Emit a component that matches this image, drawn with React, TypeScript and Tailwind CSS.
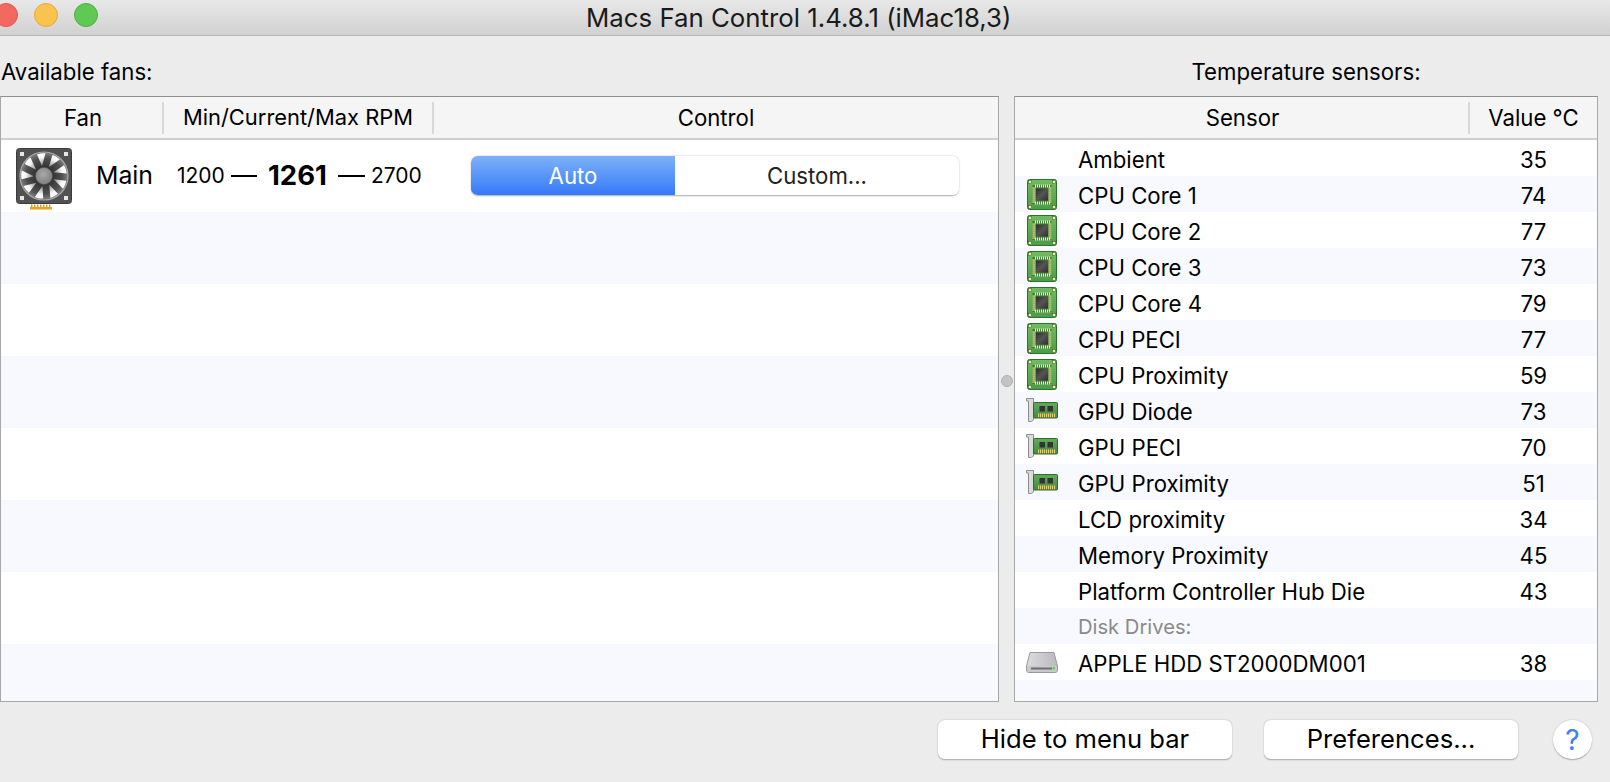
const font = { fontFamily: 'Inter, "Liberation Sans", sans-serif' }

const sensors = [
  { name: 'Ambient', value: '35', icon: '' },
  { name: 'CPU Core 1', value: '74', icon: 'cpu' },
  { name: 'CPU Core 2', value: '77', icon: 'cpu' },
  { name: 'CPU Core 3', value: '73', icon: 'cpu' },
  { name: 'CPU Core 4', value: '79', icon: 'cpu' },
  { name: 'CPU PECI', value: '77', icon: 'cpu' },
  { name: 'CPU Proximity', value: '59', icon: 'cpu' },
  { name: 'GPU Diode', value: '73', icon: 'gpu' },
  { name: 'GPU PECI', value: '70', icon: 'gpu' },
  { name: 'GPU Proximity', value: '51', icon: 'gpu' },
  { name: 'LCD proximity', value: '34', icon: '' },
  { name: 'Memory Proximity', value: '45', icon: '' },
  { name: 'Platform Controller Hub Die', value: '43', icon: '' },
  { name: 'Disk Drives:', value: '', icon: 'header' },
  { name: 'APPLE HDD ST2000DM001', value: '38', icon: 'hdd' },
]

const FanIcon = () => (
  <svg width="56" height="62" viewBox="0 0 56 62">
    <defs>
      <radialGradient id="disc" gradientUnits="userSpaceOnUse" cx="28" cy="28" r="24">
        <stop offset="0.3" stopColor="#2e2e2e" />
        <stop offset="0.75" stopColor="#505050" />
        <stop offset="1" stopColor="#808080" />
      </radialGradient>
      <radialGradient id="wedge" gradientUnits="userSpaceOnUse" cx="28" cy="28" r="23">
        <stop offset="0.45" stopColor="#8a8a8a" />
        <stop offset="0.8" stopColor="#f4f4f4" />
        <stop offset="1" stopColor="#ffffff" />
      </radialGradient>
      <radialGradient id="hub" cx="0.45" cy="0.4" r="0.7">
        <stop offset="0" stopColor="#a8a8a8" />
        <stop offset="1" stopColor="#787878" />
      </radialGradient>
    </defs>
    <rect x="0.5" y="0.5" width="55" height="55" rx="3" fill="#525252" stroke="#3a3a3a" />
    <circle cx="28" cy="28" r="24" fill="url(#disc)" stroke="#a8a8a8" strokeWidth="1.2" />
    {[0, 40, 80, 120, 160, 200, 240, 280, 320].map((a) => (
      <path key={a} transform={`rotate(${a} 28 28)`} fill="url(#wedge)" d="M26 18 L21 6.5 C23.5 5.4 27 5 29.5 5.2 Z" />
    ))}
    <circle cx="28" cy="28" r="8.5" fill="url(#hub)" stroke="#555" strokeWidth="0.5" />
    {[[4, 4], [48, 4], [4, 48], [48, 48]].map(([x, y]) => (
      <rect key={x * 100 + y} x={x} y={y} width="4" height="4" fill="#e6e6e6" />
    ))}
    <rect x="14" y="59" width="22" height="2.5" fill="#eda21e" />
    {[15, 18, 21, 24, 27, 30, 33].map((x) => (
      <rect key={x} x={x} y="56.5" width="1.4" height="3" fill="#d99a2e" />
    ))}
  </svg>
)

const CpuIcon = () => {
  const pins = [0, 1, 2, 3, 4, 5, 6, 7]
  return (
    <svg width="30" height="31" viewBox="0 0 30 31">
      <defs>
        <linearGradient id="pcb" x1="0" y1="0" x2="0" y2="1">
          <stop offset="0" stopColor="#72bb62" />
          <stop offset="1" stopColor="#4d9a4a" />
        </linearGradient>
        <linearGradient id="die" x1="0" y1="0" x2="1" y2="1">
          <stop offset="0" stopColor="#2f2f2f" />
          <stop offset="0.5" stopColor="#555" />
          <stop offset="1" stopColor="#2f2f2f" />
        </linearGradient>
      </defs>
      <rect x="0.5" y="0.5" width="29" height="30" rx="2" fill="url(#pcb)" stroke="#2d7330" />
      {[[1.5, 1.5], [25.5, 1.5], [1.5, 26.5], [25.5, 26.5]].map(([x, y]) => (
        <rect key={x * 100 + y} x={x} y={y} width="3" height="3" fill="#f6ec9e" stroke="#2d5a2a" strokeWidth="0.5" />
      ))}
      <rect x="5.5" y="6" width="19" height="19" fill="#3f7a3c" />
      {pins.map((i) => (
        <g key={i} fill="#f7ec90">
          <rect x={8 + i * 2} y="5.5" width="1.1" height="3" />
          <rect x={8 + i * 2} y="22.5" width="1.1" height="3" />
          <rect x="5.5" y={8.5 + i * 2} width="3" height="1.1" />
          <rect x="21.5" y={8.5 + i * 2} width="3" height="1.1" />
        </g>
      ))}
      <rect x="9" y="9.5" width="12" height="12" fill="url(#die)" />
    </svg>
  )
}

const GpuIcon = () => (
  <svg width="32" height="24" viewBox="0 0 32 24" className="-ml-[1px]">
    <defs>
      <linearGradient id="board" x1="0" y1="0" x2="0" y2="1">
        <stop offset="0" stopColor="#62ac58" />
        <stop offset="1" stopColor="#3f8a42" />
      </linearGradient>
    </defs>
    <path d="M0.5 0.5 H7.5 V22 L5.5 23.5 H2.5 V3 H0.5 Z" fill="#dcdcdc" stroke="#8f8f8f" />
    <rect x="7.5" y="4.5" width="24" height="15.5" rx="1" fill="url(#board)" stroke="#2b6d2e" />
    <rect x="13.5" y="8" width="5.5" height="5.5" fill="#333" />
    <rect x="21.5" y="8" width="5.5" height="5.5" fill="#333" />
    {[12, 14, 16, 18, 20, 22, 24, 26, 28].map((x) => (
      <rect key={x} x={x} y="15.5" width="1.1" height="3.8" fill="#e8cc70" />
    ))}
  </svg>
)

const HddIcon = () => (
  <svg width="32" height="21" viewBox="0 0 32 21" className="-ml-[1px]">
    <defs>
      <linearGradient id="hddTop" x1="0" y1="0" x2="1" y2="0">
        <stop offset="0" stopColor="#dcdce0" />
        <stop offset="1" stopColor="#b9b9be" />
      </linearGradient>
    </defs>
    <path d="M4 0.5 H28 L31.5 14 V18 Q31.5 20.5 29 20.5 H3 Q0.5 20.5 0.5 18 V14 Z" fill="url(#hddTop)" stroke="#9a9a9e" />
    <rect x="1" y="14" width="30" height="6" rx="2" fill="#c9c9cc" />
    <rect x="5" y="15.5" width="21" height="2" fill="#6f6f6f" />
    <rect x="26.5" y="15" width="2.5" height="2.5" fill="#4fd84f" />
  </svg>
)

const HeadDivider = () => <div className="w-[2px] h-[32px] bg-[#d8d8d8]" />

const App = () => {
  return (
    <div className="w-[1610px] h-[782px] bg-[#ececec] overflow-hidden text-black flex flex-col" style={font}>
      <div className="h-[36px] shrink-0 flex items-center border-b border-[#b4b4b4] bg-gradient-to-b from-[#e8e8e8] to-[#d1d1d1]">
        <div className="flex gap-[16px] -ml-[6px] mb-[6px]">
          <div className="w-[24px] h-[24px] rounded-full bg-[#f3685f] border border-[#e0554c]" />
          <div className="w-[24px] h-[24px] rounded-full bg-[#f9c34f] border border-[#e3ab3a]" />
          <div className="w-[24px] h-[24px] rounded-full bg-[#5fc953] border border-[#4cb141]" />
        </div>
        <div className="ml-[488px] text-[25.8px] leading-none text-[#1a1a1a] whitespace-nowrap">Macs Fan Control 1.4.8.1 (iMac18,3)</div>
      </div>

      <div className="flex h-[60px] shrink-0 items-end pb-[12px] text-[22.2px] leading-[24px]">
        <div className="w-[999px] pl-[1px]">Available fans:</div>
        <div className="w-[15px]" />
        <div className="w-[584px] text-center">Temperature sensors:</div>
      </div>

      <div className="flex h-[606px] shrink-0">
        <div className="w-[999px] border border-[#a8a8a8] border-t-[#8f8f8f] bg-white flex flex-col">
          <div className="h-[43px] shrink-0 bg-[#f5f5f5] border-b-2 border-[#d0d0d0] flex items-center text-[22.2px]">
            <div className="w-[161px] pl-[3px] text-center">Fan</div>
            <HeadDivider />
            <div className="w-[268px] text-center whitespace-nowrap text-[21.9px]">Min/Current/Max RPM</div>
            <HeadDivider />
            <div className="flex-1 text-center">Control</div>
          </div>
          <div className="h-[72px] shrink-0 flex items-center">
            <div className="ml-[15px] mt-[6px]"><FanIcon /></div>
            <div className="ml-[24px] w-[81px] text-[24.8px]">Main</div>
            <div className="flex items-center whitespace-nowrap">
              <span className="text-[21px] w-[46px]">1200</span>
              <span className="ml-[8px] w-[26px] h-[2px] bg-black" />
              <span className="ml-[11px] text-[27.5px] font-bold w-[60px]">1261</span>
              <span className="ml-[10px] w-[27px] h-[2px] bg-black" />
              <span className="ml-[6px] text-[21px] w-[49px]">2700</span>
            </div>
            <div className="ml-[51px] w-[488px] h-[40px] flex rounded-[7px] border-b border-[#bcbcbc] shadow-[0_0_1.5px_#999] overflow-hidden text-[22.2px]">
              <div className="w-[204px] flex items-center justify-center text-white bg-gradient-to-b from-[#7eb1f8] to-[#3478f8]">Auto</div>
              <div className="flex-1 flex items-center justify-center text-[#222] bg-white">Custom...</div>
            </div>
          </div>
          <div className="h-[72px] shrink-0 bg-[#f7f9fe]" />
          <div className="h-[72px] shrink-0" />
          <div className="h-[72px] shrink-0 bg-[#f7f9fe]" />
          <div className="h-[72px] shrink-0" />
          <div className="h-[72px] shrink-0 bg-[#f7f9fe]" />
          <div className="h-[72px] shrink-0" />
          <div className="flex-1 bg-[#f7f9fe]" />
        </div>

        <div className="w-[15px] flex items-center justify-center pb-[36px]">
          <div className="w-[12px] h-[12px] rounded-full bg-[#c4c4c4] border border-[#b0b0b0]" />
        </div>

        <div className="w-[584px] border border-[#a8a8a8] border-t-[#8f8f8f] bg-white flex flex-col">
          <div className="h-[43px] shrink-0 bg-[#f5f5f5] border-b-2 border-[#d0d0d0] flex items-center text-[22.2px]">
            <div className="w-[453px] pl-[2px] text-center">Sensor</div>
            <HeadDivider />
            <div className="flex-1 text-center">Value °C</div>
          </div>
          {sensors.map((s, i) => (
            <div key={s.name} className={`h-[36px] shrink-0 flex items-center ${i % 2 === 1 ? 'bg-[#f7f9fe]' : ''}`}>
              <div className="w-[63px] pl-[12px] flex items-center shrink-0">
                {s.icon === 'cpu' && <CpuIcon />}
                {s.icon === 'gpu' && <GpuIcon />}
                {s.icon === 'hdd' && <HddIcon />}
              </div>
              <div className={`w-[392px] pt-[3px] whitespace-nowrap ${s.icon === 'header' ? 'text-[20.2px] text-[#8a8a8a]' : 'text-[22.2px]'}`}>{s.name}</div>
              <div className="flex-1 pt-[3px] text-center text-[22.2px]">{s.value}</div>
            </div>
          ))}
          <div className="flex-1 bg-[#f7f9fe]" />
        </div>
      </div>

      <div className="flex items-center pt-[18px]">
        <button className="ml-[938px] w-[294px] h-[40px] bg-white rounded-[7px] border-b border-[#b5b5b5] shadow-[0_0_1.5px_#a8a8a8] text-[25.6px] flex items-center justify-center">Hide to menu bar</button>
        <button className="ml-[32px] w-[254px] h-[40px] bg-white rounded-[7px] border-b border-[#b5b5b5] shadow-[0_0_1.5px_#a8a8a8] text-[25.6px] flex items-center justify-center">Preferences...</button>
        <button className="ml-[35px] w-[39px] h-[40px] bg-white rounded-full border-b border-[#b5b5b5] shadow-[0_0_1.5px_#a8a8a8] text-[28px] text-[#3b7ff0] flex items-center justify-center">?</button>
      </div>
    </div>
  )
}

export default App
